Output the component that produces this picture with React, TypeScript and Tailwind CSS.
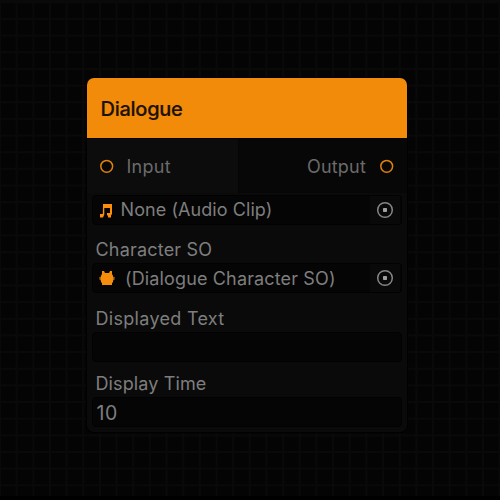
import type { ReactNode } from "react";

function Port() {
  return (
    <svg className="size-[14px] shrink-0" viewBox="0 0 14 14">
      <circle cx="6.7" cy="7.3" r="5.9" fill="#080706" stroke="#df810a" strokeWidth="1.5" />
    </svg>
  );
}

function Label({ children, className }: { children: ReactNode; className: string }) {
  return <div className={`whitespace-nowrap pl-[3.5px] text-[18px] leading-[22px] text-[#7e7e7e] ${className}`}>{children}</div>;
}

function Field({ children }: { children?: ReactNode }) {
  return (
    <div className="flex h-[30px] items-center overflow-hidden rounded-[4px] border border-[#020202] bg-[#050505] text-[18px] leading-[22px] text-[#7e7e7e]">
      {children}
    </div>
  );
}

function Picker() {
  return (
    <div className="ml-auto mr-px flex h-full w-[30px] items-center justify-center bg-[#090909]">
      <svg className="size-[18px]" viewBox="0 0 18 18">
        <circle cx="9" cy="9" r="7.3" fill="none" stroke="#858585" strokeWidth="1.5" />
        <rect x="7" y="7" width="4" height="4" rx=".7" fill="#a0a0a0" />
      </svg>
    </div>
  );
}

function NoteIcon() {
  return (
    <svg className="ml-[6px] size-[15px] shrink-0" viewBox="0 0 15 15" fill="#ff8c0a">
      <path d="M4 1H13V11L12 12.5V14.5H9V13L8 12V10H11V5H5.3V11.5L4 14.5H1V11H3.8Z" />
    </svg>
  );
}

function CreatureIcon() {
  return (
    <svg className="ml-[6px] size-[16px] shrink-0" viewBox="0 0 16 16">
      <path d="M0 7H2V10H.5Z M14 7H16L15.5 10H14Z" fill="#8a4c06" />
      <path d="M3 1H5L6 3H10L11 1H13V4Q14.7 6 14.5 9Q14.3 12 13 13.2V15H3V13.2Q1.7 12 1.5 9Q1.3 6 3 4Z" fill="#f58d0c" />
    </svg>
  );
}

const grid =
  "bg-[linear-gradient(to_right,#090909_2px,transparent_2px),linear-gradient(to_bottom,#090909_2px,transparent_2px)] bg-[size:16.667px_16.667px] bg-[position:-1px_-1.7px]";

export default function App() {
  return (
    <div className="h-[500px] w-[500px] overflow-hidden bg-black font-['Inter',sans-serif]">
      <div className={`h-[496px] border-t-[3px] border-[#090909] bg-[#040404] pl-[87px] pt-[75px] ${grid}`}>
        <div className="h-[354px] w-[320px] overflow-hidden rounded-[7px] bg-[#0a0a0a] shadow-[0_0_0_1px_#010101]">
          <div className="flex h-[60px] items-center bg-[#f28b0a] pl-[13.5px] pt-[2px] text-[20px] font-medium leading-6 text-[#1b1104] [-webkit-text-stroke:0.2px_#1b1104]">
            <span className="tracking-[-0.25px]">Dialogue</span>
          </div>
          <div className="flex h-[55px] border-t border-[#050505] text-[18px] text-[#6b6b6b]">
            <div className="flex w-[152px] items-center border-r border-[#050505] bg-[#0c0c0c] pl-[13px]">
              <Port />
              <span className="ml-[12.5px] pt-px tracking-[0.25px]">Input</span>
            </div>
            <div className="flex flex-1 items-center justify-end bg-[#070707] pr-[13px]">
              <span className="mr-[14px] pt-px tracking-[0.2px]">Output</span>
              <Port />
            </div>
          </div>
          <div className="px-[5px] pt-[2px]">
            <Field>
              <NoteIcon />
              <span className="ml-[6.5px] tracking-[0.07px]">None (Audio Clip)</span>
              <Picker />
            </Field>
            <Label className="mb-[2px] mt-[14px] tracking-[0.2px]">Character SO</Label>
            <Field>
              <CreatureIcon />
              <span className="ml-[10px] pt-px tracking-[0.14px]">(Dialogue Character SO)</span>
              <Picker />
            </Field>
            <Label className="mb-[2px] mt-[15px] tracking-[0.3px]">Displayed Text</Label>
            <Field />
            <Label className="mb-[2px] mt-[11px] tracking-[0.12px]">Display Time</Label>
            <Field>
              <span className="pl-[3.5px] pt-[2px] text-[19.5px] tracking-[0.5px]">10</span>
            </Field>
          </div>
        </div>
      </div>
    </div>
  );
}
